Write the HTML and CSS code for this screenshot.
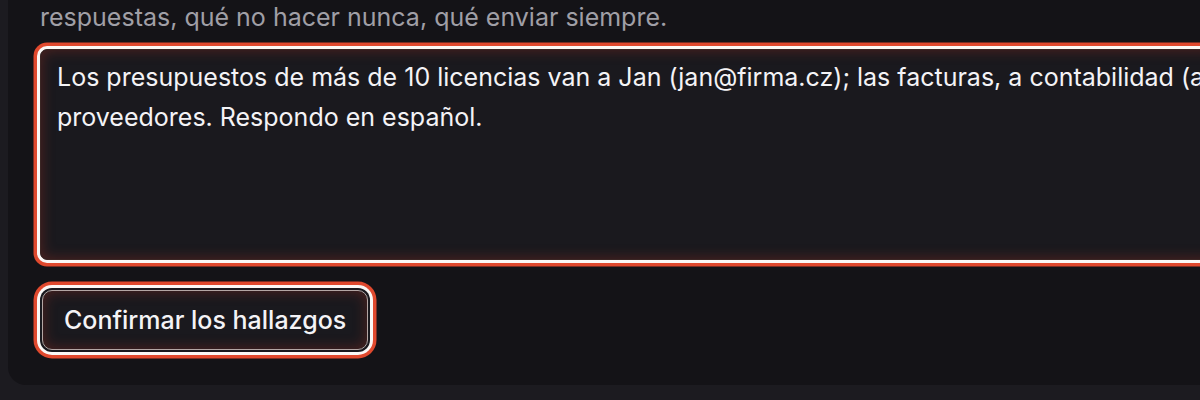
FILE: index.html
```html
<!DOCTYPE html>
<html lang="es">
<head>
<meta charset="utf-8">
<link rel="stylesheet" href="styles.css">
</head>
<body>
<div class="page">
  <section class="card">
    <p class="desc">respuestas, qué no hacer nunca, qué enviar siempre.</p>
    <textarea class="notes" spellcheck="false">Los presupuestos de más de 10 licencias van a Jan (jan@firma.cz); las facturas, a contabilidad (a través del formulario); no contesto a los
proveedores. Respondo en español.</textarea>
    <div class="actions">
      <button class="confirm" type="button">Confirmar los hallazgos</button>
    </div>
  </section>
</div>
</body>
</html>
```

FILE: styles.css
```css
html, body {
  margin: 0;
  padding: 0;
  background: #1c1b20;
  height: 100%;
  overflow: hidden;
}
body {
  font-family: Inter, "Noto Sans", sans-serif;
  color: #f2f1f4;
}
.page {
  padding: 0 0 0 8px;
}
.card {
  background: #141317;
  border-radius: 0 0 0 18px;
  padding: 0 0 35px 32px;
  width: 2400px;
  margin-top: -3px;
}
.desc {
  margin: 0 0 12px 0;
  font-size: 25px;
  line-height: 40px;
  color: #a09fa6;
  white-space: nowrap;
}
.notes {
  display: block;
  box-sizing: border-box;
  width: 2300px;
  height: 211px;
  margin: 0;
  padding: 7px 16px;
  resize: none;
  font-family: Inter, "Noto Sans", sans-serif;
  font-size: 25px;
  line-height: 40px;
  color: #f4f3f6;
  background: #1a191e;
  border: 1px solid #3a2624;
  border-radius: 7px;
  outline: none;
  overflow: hidden;
  white-space: pre-wrap;
  box-shadow: 0 0 0 3px #fbf8f6, 0 0 0 6.5px #e0492e, inset 0 0 14px rgba(190, 55, 35, 0.35);
}
.actions {
  margin-top: 30px;
  padding-left: 2px;
}
.confirm {
  box-sizing: border-box;
  height: 60px;
  padding: 0 21px;
  font-family: Inter, "Noto Sans", sans-serif;
  font-size: 25px;
  font-weight: 500;
  color: #f4f3f6;
  background: #1a191e;
  border: 1px solid #b3a6a4;
  border-radius: 10px;
  box-shadow: 0 0 0 2px #1a191e, 0 0 0 5px #fbf8f6, 0 0 0 8.5px #e0492e, inset 0 0 14px rgba(190, 55, 35, 0.35);
  cursor: pointer;
}
```
